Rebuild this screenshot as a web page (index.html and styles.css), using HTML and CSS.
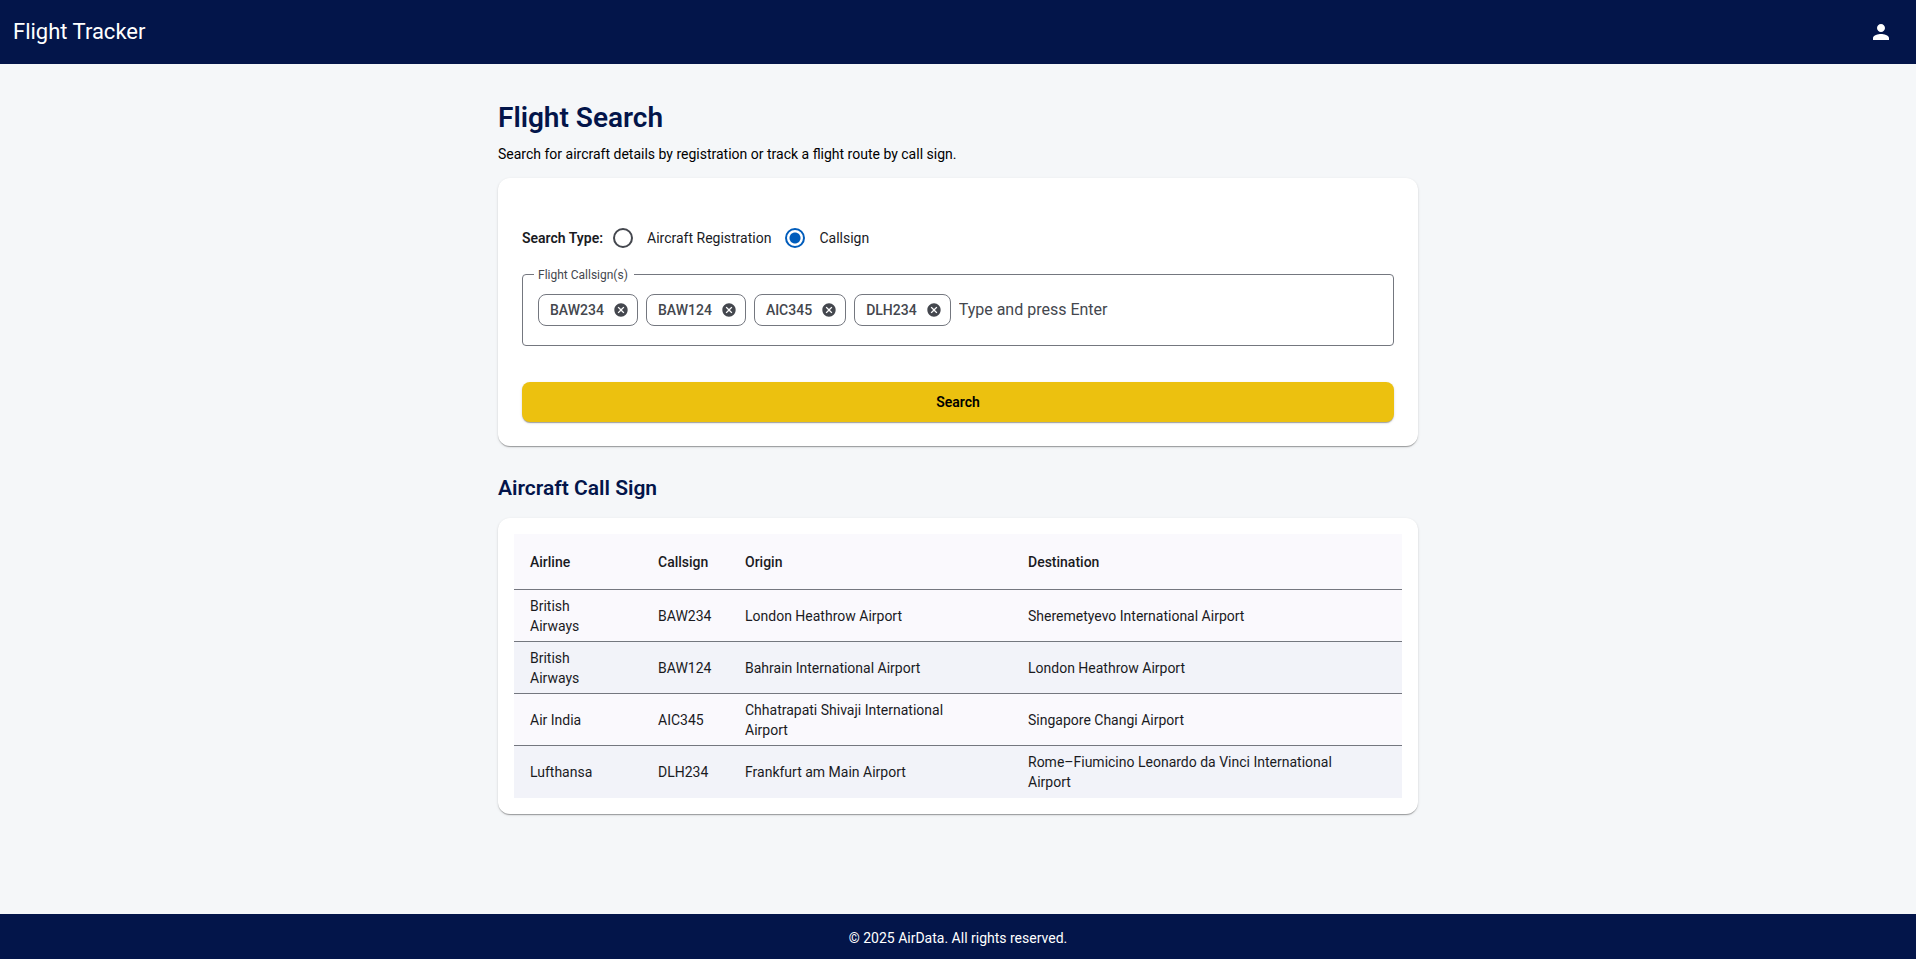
FILE: index.html
```html
<!DOCTYPE html>
<html lang="en">
<head>
<meta charset="utf-8">
<title>Flight Tracker</title>
<meta name="viewport" content="width=device-width, initial-scale=1">
<link rel="stylesheet" href="styles.css">
</head>
<body>
<svg class="sprite" aria-hidden="true">
  <symbol id="icon-cancel" viewBox="0 0 24 24"><path d="M12 2C6.47 2 2 6.47 2 12s4.47 10 10 10 10-4.47 10-10S17.53 2 12 2zm5 13.59L15.59 17 12 13.41 8.41 17 7 15.59 10.59 12 7 8.41 8.41 7 12 10.59 15.59 7 17 8.41 13.41 12 17 15.59z"/></symbol>
</svg>
<header class="toolbar">
  <span class="brand">Flight Tracker</span>
  <button class="account" type="button" aria-label="Account">
    <svg class="account-icon" viewBox="0 0 24 24"><path d="M12 12c2.21 0 4-1.79 4-4s-1.79-4-4-4-4 1.79-4 4 1.79 4 4 4zm0 2c-2.67 0-8 1.34-8 4v2h16v-2c0-2.66-5.33-4-8-4z"/></svg>
  </button>
</header>
<main class="page">
  <h1 class="page-title">Flight Search</h1>
  <p class="intro">Search for aircraft details by registration or track a flight route by call sign.</p>
  <form class="card search-card">
    <div class="search-type" role="radiogroup" aria-labelledby="type-label">
      <span class="type-label" id="type-label">Search Type:</span>
      <label class="option"><input class="radio" type="radio" name="type">Aircraft Registration</label>
      <label class="option"><input class="radio" type="radio" name="type" checked>Callsign</label>
    </div>
    <fieldset class="field">
      <legend class="field-label"><label for="callsigns">Flight Callsign(s)</label></legend>
      <div class="chips">
        <span class="chip">BAW234<button class="chip-remove" type="button" aria-label="Remove BAW234"><svg class="chip-icon"><use href="#icon-cancel"/></svg></button></span>
        <span class="chip">BAW124<button class="chip-remove" type="button" aria-label="Remove BAW124"><svg class="chip-icon"><use href="#icon-cancel"/></svg></button></span>
        <span class="chip">AIC345<button class="chip-remove" type="button" aria-label="Remove AIC345"><svg class="chip-icon"><use href="#icon-cancel"/></svg></button></span>
        <span class="chip">DLH234<button class="chip-remove" type="button" aria-label="Remove DLH234"><svg class="chip-icon"><use href="#icon-cancel"/></svg></button></span>
        <input class="chip-input" id="callsigns" type="text" placeholder="Type and press Enter">
      </div>
    </fieldset>
    <button class="submit" type="submit">Search</button>
  </form>
  <h2 class="section-title">Aircraft Call Sign</h2>
  <section class="card table-card">
    <table class="flights">
      <colgroup><col class="col-airline"><col class="col-callsign"><col class="col-origin"><col></colgroup>
      <thead>
        <tr><th scope="col">Airline</th><th scope="col">Callsign</th><th scope="col">Origin</th><th scope="col">Destination</th></tr>
      </thead>
      <tbody>
        <tr><td>British Airways</td><td>BAW234</td><td>London Heathrow Airport</td><td>Sheremetyevo International Airport</td></tr>
        <tr><td>British Airways</td><td>BAW124</td><td>Bahrain International Airport</td><td>London Heathrow Airport</td></tr>
        <tr><td>Air India</td><td>AIC345</td><td>Chhatrapati Shivaji International Airport</td><td>Singapore Changi Airport</td></tr>
        <tr><td>Lufthansa</td><td>DLH234</td><td>Frankfurt am Main Airport</td><td>Rome–Fiumicino Leonardo da Vinci International Airport</td></tr>
      </tbody>
    </table>
  </section>
</main>
<footer class="footer">© 2025 AirData. All rights reserved.</footer>
</body>
</html>
```
FILE: styles.css
```css
:root {
  --navy: #03154a;
  --ink: #1a1b1f;
  --muted: #44474e;
  --outline: #74777f;
  --shadow: 0 2px 1px -1px rgba(0, 0, 0, 0.2), 0 1px 1px 0 rgba(0, 0, 0, 0.14), 0 1px 3px 0 rgba(0, 0, 0, 0.12);
}

* {
  box-sizing: border-box;
}

body {
  margin: 0;
  min-height: 100vh;
  display: flex;
  flex-direction: column;
  background: #f5f7f9;
  color: var(--ink);
  font: 400 14px/20px Roboto, sans-serif;
}

.sprite {
  display: none;
}

.toolbar {
  display: flex;
  align-items: center;
  justify-content: space-between;
  height: 64px;
  padding: 0 11px 0 13px;
  background: var(--navy);
  color: #fff;
}

.brand {
  font-size: 22px;
  line-height: 28px;
}

.account {
  display: flex;
  padding: 12px;
  border: 0;
  background: none;
}

.account-icon {
  width: 24px;
  height: 24px;
  fill: #fff;
}

.page {
  flex: 1;
  width: 100%;
  max-width: 960px;
  margin: 0 auto;
  padding: 36px 20px;
}

.page-title {
  margin: 0;
  color: var(--navy);
  font-size: 28px;
  font-weight: 600;
  line-height: 36px;
}

.intro {
  margin: 8px 0 14px;
  color: #000;
}

.card {
  border-radius: 12px;
  background: #fff;
  box-shadow: var(--shadow);
}

.search-card {
  padding: 40px 24px 24px;
}

.search-type {
  display: flex;
  align-items: center;
  height: 40px;
}

.type-label {
  font-weight: 600;
}

.option {
  display: flex;
  align-items: center;
  padding-right: 4px;
}

.radio {
  appearance: none;
  width: 20px;
  height: 20px;
  margin: 0 14px 0 10px;
  border: 2px solid var(--muted);
  border-radius: 50%;
}

.radio:checked {
  border-color: #005cbb;
  background: radial-gradient(circle, #005cbb 5px, #fff 6px);
}

.field {
  min-width: 0;
  margin: 5px 0 36px;
  padding: 0 15px 19px;
  border: 1px solid var(--outline);
  border-radius: 4px;
}

.field-label {
  margin-left: -4px;
  padding: 2px 6px 0 4px;
  color: var(--muted);
  font-size: 12px;
  line-height: 20px;
}

.chips {
  display: flex;
  flex-wrap: wrap;
  gap: 8px;
  padding-top: 9px;
}

.chip {
  display: flex;
  align-items: center;
  height: 32px;
  padding-left: 11px;
  border: 1px solid var(--outline);
  border-radius: 8px;
  color: var(--muted);
  font-weight: 500;
}

.chip-remove {
  display: flex;
  padding: 0 8px 0 9px;
  border: 0;
  background: none;
}

.chip-icon {
  width: 16px;
  height: 16px;
  fill: var(--muted);
}

.chip-input {
  flex: 1;
  min-width: 150px;
  padding: 0;
  border: 0;
  outline: 0;
  background: none;
  color: var(--ink);
  font: 400 16px/24px Roboto, sans-serif;
}

.chip-input::placeholder {
  color: var(--muted);
  opacity: 1;
}

.submit {
  display: block;
  width: 100%;
  height: 40px;
  border: 0;
  border-radius: 8px;
  background: #ecc10f;
  box-shadow: var(--shadow);
  color: #000;
  font: 600 14px/20px Roboto, sans-serif;
}

.section-title {
  margin: 28px 0 16px;
  color: var(--navy);
  font-size: 21px;
  font-weight: 600;
  line-height: 28px;
}

.table-card {
  padding: 16px;
}

.flights {
  width: 100%;
  table-layout: fixed;
  border-spacing: 0;
  background: #faf9fd;
}

.col-airline {
  width: 128px;
}

.col-callsign {
  width: 87px;
}

.col-origin {
  width: 283px;
}

.flights th,
.flights td {
  height: 52px;
  padding: 0 36px 0 16px;
  border-bottom: 1px solid var(--outline);
  text-align: left;
}

.flights th:nth-child(2),
.flights td:nth-child(2) {
  padding-right: 16px;
}

.flights th {
  height: 56px;
  font-weight: 500;
}

.flights tbody tr:nth-child(even) {
  background: #f2f3f9;
}

.flights tbody tr:last-child td {
  border-bottom: 0;
}

.footer {
  padding: 14px 12px 10px;
  background: var(--navy);
  color: #fff;
  line-height: 21px;
  text-align: center;
}
```
